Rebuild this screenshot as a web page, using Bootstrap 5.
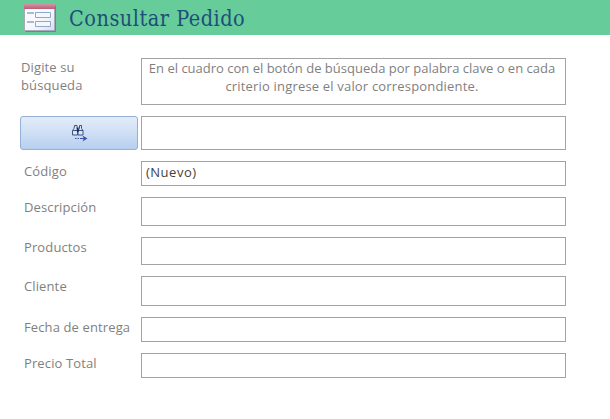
<!DOCTYPE html>
<html lang="es">
<head>
<meta charset="utf-8">
<meta name="viewport" content="width=device-width, initial-scale=1">
<title>Consultar Pedido</title>
<link href="https://cdn.jsdelivr.net/npm/bootstrap@5.3.0/dist/css/bootstrap.min.css" rel="stylesheet">
<style>
body{font:13px/18px "Open Sans","Noto Sans",sans-serif;color:#7f7f7f;background:#fff;overflow:hidden}
.title-bar{height:35px;background:#66cc99;padding-left:20px}
.title-bar h1{font:21.5px/37px "DejaVu Serif Condensed","DejaVu Serif",serif;letter-spacing:.5px;color:#1f4e79;margin-left:9px}
.order-form{padding:23px 44px 0 20px;gap:11px}
.field-label{width:121px;flex:none;padding:1px 0 0 4px;white-space:nowrap;letter-spacing:.12px}
.field-label.intro{padding:0 0 0 1px}
.field-box{width:0;border:1px solid #a3a3a5;border-radius:0;padding:0 4px 3px;font-size:13px;line-height:18px;min-height:0;color:#3f3f3f;box-shadow:none;letter-spacing:.5px}
.help-box{color:#7f7f7f;padding:0 3px 0 0;letter-spacing:0}
.help-end{letter-spacing:.18px}
.h25{height:25px}.h28{height:28px}.h29{height:29px}.h30{height:30px}.h34{height:34px}.h47{height:47px}
.search-btn{width:118px;height:34px;margin-right:3px;border:1px solid #94b0d6;border-radius:3px;background:linear-gradient(#e3ecf9,#cfdff5 50%,#b7cfef)}
</style>
</head>
<body>
<header class="title-bar d-flex align-items-start">
  <svg width="40" height="35" viewBox="0 0 40 35" aria-hidden="true">
    <defs>
      <linearGradient id="paper" x2="1" y2="1"><stop stop-color="#fff"/><stop offset=".6" stop-color="#f4f7fd"/><stop offset="1" stop-color="#d5def0"/></linearGradient>
      <linearGradient id="rose" x2="0" y2="1"><stop stop-color="#d594a6"/><stop offset="1" stop-color="#b85c78"/></linearGradient>
    </defs>
    <path d="M6 6h30v26H6z" fill="#386b58" opacity=".35"/>
    <path d="M5 5h30.500v26.500H5z" fill="#386b58" opacity=".55"/>
    <path d="M4.500 4.500h30v26h-30z" fill="url(#paper)" stroke="#a9a9bb"/>
    <path d="M4 4h31v5H4z" fill="url(#rose)"/>
    <path d="M7 13h7M7 22h7" stroke="#a9b9d6" stroke-width="2"/>
    <path d="M15.500 12.500h15v5h-15zM15.500 21.500h15v5h-15z" fill="#f4f7fd" stroke="#91a7ca"/>
  </svg>
  <h1 class="mb-0">Consultar Pedido</h1>
</header>
<form class="order-form d-flex flex-column">
  <div class="d-flex"><div class="field-label intro">Digite su<br>búsqueda</div><div class="field-box help-box h47 flex-fill text-center">En el cuadro con el botón de búsqueda por palabra clave o en cada<br><span class="help-end">criterio ingrese el valor correspondiente.</span></div></div>
  <div class="d-flex">
    <button type="button" class="search-btn btn p-0 d-flex" aria-label="Buscar">
      <svg width="116" height="32" viewBox="0 0 116 32" aria-hidden="true">
        <g fill="#dce8f8" stroke="#3d5280">
          <path d="M53.500 8.500h2.500v3l.500 2v4.500h-5v-4.500l1.500-2zM58.500 8.500h2v3l1.500 2v4.500h-5v-4.500l1.500-2z"/>
          <path d="M52 13.500h10" fill="none"/>
          <path d="M56.800 10.500v4.500" stroke="#172b55" stroke-width="1.800"/>
        </g>
        <path d="M54 21.500h1.500M56.500 21.500H58M59 21.500h6" stroke="#3a55ad" stroke-width="1.200"/>
        <path d="M61.500 18.500l5 3-5 3 1.300-3z" fill="#3a55ad"/>
      </svg>
    </button>
    <input class="form-control field-box h34 flex-fill" aria-label="Búsqueda">
  </div>
  <div class="d-flex"><label class="field-label" for="codigo">Código</label><input id="codigo" class="form-control field-box h25 flex-fill" value="(Nuevo)"></div>
  <div class="d-flex"><label class="field-label" for="descripcion">Descripción</label><input id="descripcion" class="form-control field-box h29 flex-fill"></div>
  <div class="d-flex"><label class="field-label" for="productos">Productos</label><input id="productos" class="form-control field-box h28 flex-fill"></div>
  <div class="d-flex"><label class="field-label" for="cliente">Cliente</label><input id="cliente" class="form-control field-box h30 flex-fill"></div>
  <div class="d-flex"><label class="field-label" for="fecha">Fecha de entrega</label><input id="fecha" class="form-control field-box h25 flex-fill"></div>
  <div class="d-flex"><label class="field-label" for="precio">Precio Total</label><input id="precio" class="form-control field-box h25 flex-fill"></div>
</form>
<script src="https://cdn.jsdelivr.net/npm/bootstrap@5.3.0/dist/js/bootstrap.bundle.min.js"></script>
</body>
</html>
